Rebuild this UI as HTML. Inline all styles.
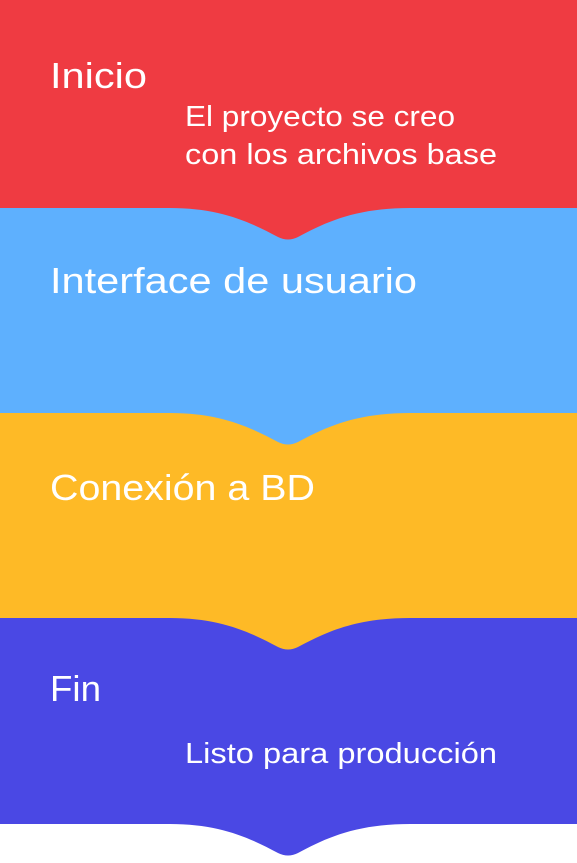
<!DOCTYPE html>
<html><head><meta charset="utf-8"><style>
html,body{margin:0;padding:0;background:#fff;width:577px;height:863px;overflow:hidden}
svg{display:block}
text{font-family:"Liberation Sans",sans-serif;fill:#fff}
</style></head><body>
<svg width="577" height="863" viewBox="0 0 577 863">
<path fill="#4A48E4" d="M0,600 L577,600 L577,824 L410,824 C356,824 326,838 298,853 Q288,858 278,853 C250,838 220,824 170,824 L0,824Z"/>
<path fill="#FEBA26" d="M0,400 L577,400 L577,618 L410,618 C356,618 326,632 298,647 Q288,652 278,647 C250,632 220,618 170,618 L0,618Z"/>
<path fill="#5EB0FE" d="M0,200 L577,200 L577,413 L410,413 C356,413 326,427 298,442 Q288,447 278,442 C250,427 220,413 170,413 L0,413Z"/>
<path fill="#EF3B42" d="M0,0 L577,0 L577,208 L410,208 C356,208 326,222 298,237 Q288,242 278,237 C250,222 220,208 170,208 L0,208Z"/>
<text x="50" y="88" font-size="36" textLength="97" lengthAdjust="spacingAndGlyphs">Inicio</text>
<text x="185" y="126" font-size="29" textLength="270" lengthAdjust="spacingAndGlyphs">El proyecto se creo</text>
<text x="185" y="164" font-size="29" textLength="312" lengthAdjust="spacingAndGlyphs">con los archivos base</text>
<text x="50" y="293" font-size="36" textLength="367" lengthAdjust="spacingAndGlyphs">Interface de usuario</text>
<text x="50" y="500" font-size="36" textLength="265" lengthAdjust="spacingAndGlyphs">Conexión a BD</text>
<text x="50" y="701" font-size="36" textLength="51" lengthAdjust="spacingAndGlyphs">Fin</text>
<text x="185" y="763" font-size="29" textLength="312" lengthAdjust="spacingAndGlyphs">Listo para producción</text>
</svg>
</body></html>
